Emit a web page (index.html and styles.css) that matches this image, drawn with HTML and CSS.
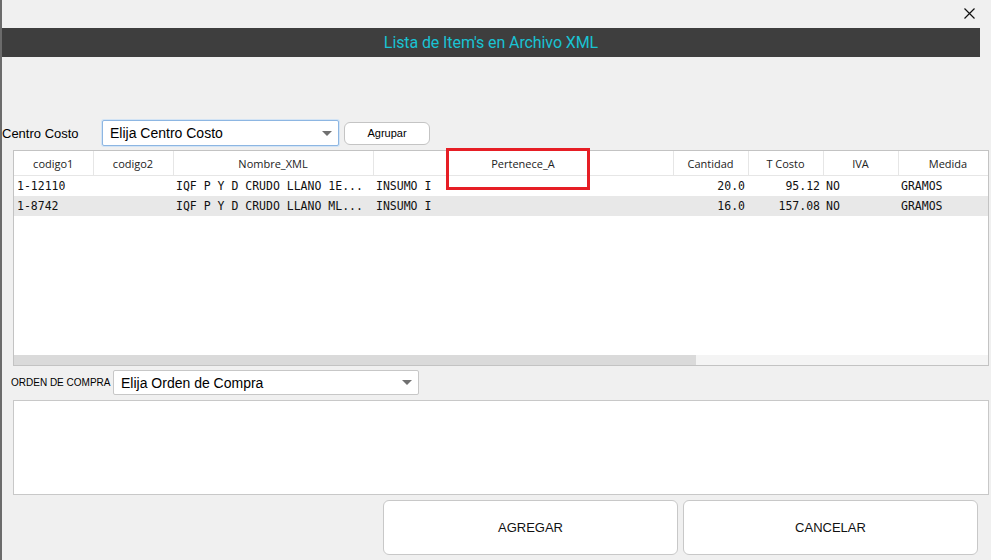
FILE: index.html
```html
<!DOCTYPE html>
<html lang="es">
<head>
    <meta charset="UTF-8">
    <title>Lista de Item's en Archivo XML</title>
    <link rel="stylesheet" href="styles.css">
</head>
<body>
    <div class="window">
        <div class="top-strip">
            <span class="close-btn">
                <svg width="11" height="11" viewBox="0 0 11 11"><path d="M0.5 0.5 L10.5 10.5 M10.5 0.5 L0.5 10.5" stroke="#111" stroke-width="1.2" fill="none"/></svg>
            </span>
        </div>
        <div class="title-bar">Lista de Item's en Archivo XML</div>

        <div class="cost-row">
            <label class="cost-label">Centro Costo</label>
            <div class="select select-focus">
                <span>Elija Centro Costo</span>
                <span class="arrow"></span>
            </div>
            <button class="small-btn">Agrupar</button>
        </div>

        <div class="grid-box">
            <div class="grid-scroll">
                <table class="grid">
                    <colgroup>
                        <col style="width:79px"><col style="width:80px"><col style="width:200px"><col style="width:300px">
                        <col style="width:75px"><col style="width:75px"><col style="width:75px"><col style="width:100px">
                    </colgroup>
                    <thead>
                        <tr>
                            <th>codigo1</th><th>codigo2</th><th>Nombre_XML</th><th>Pertenece_A</th>
                            <th>Cantidad</th><th>T Costo</th><th>IVA</th><th>Medida</th>
                        </tr>
                    </thead>
                    <tbody>
                        <tr>
                            <td>1-12110</td><td></td><td>IQF P Y D CRUDO LLANO 1E...</td><td>INSUMO I</td>
                            <td class="num">20.0</td><td class="num">95.12</td><td>NO</td><td>GRAMOS</td>
                        </tr>
                        <tr class="alt">
                            <td>1-8742</td><td></td><td>IQF P Y D CRUDO LLANO ML...</td><td>INSUMO I</td>
                            <td class="num">16.0</td><td class="num">157.08</td><td>NO</td><td>GRAMOS</td>
                        </tr>
                    </tbody>
                </table>
            </div>
            <div class="hscroll"><div class="hthumb"></div></div>
            <div class="highlight"></div>
        </div>

        <div class="order-row">
            <label class="order-label">ORDEN DE COMPRA</label>
            <div class="select order-select">
                <span>Elija Orden de Compra</span>
                <span class="arrow"></span>
            </div>
        </div>

        <div class="notes"></div>

        <div class="actions">
            <button class="big-btn">AGREGAR</button>
            <button class="big-btn">CANCELAR</button>
        </div>
    </div>
</body>
</html>
```

FILE: styles.css
```css
/* General */
body {
    margin: 0;
    padding: 0;
    background-color: #f0f0f0;
    font-family: 'Liberation Sans', Arial, sans-serif;
    color: #000;
}

.window {
    height: 560px;
    border-left: 2px solid #6b6b6b;
    box-sizing: border-box;
    overflow: hidden;
}

/* Top */
.top-strip {
    height: 28px;
    display: flex;
    justify-content: flex-end;
    align-items: flex-start;
}

.close-btn {
    margin: 8px 16px 0 0;
    line-height: 0;
}

.title-bar {
    height: 29px;
    margin-right: 11px;
    background-color: #3e3e3e;
    color: #19c3d3;
    font-family: Roboto, 'Liberation Sans', sans-serif;
    font-size: 16px;
    letter-spacing: -0.1px;
    text-align: center;
    line-height: 30px;
}

/* Centro costo */
.cost-row {
    display: flex;
    align-items: center;
    margin-top: 63px;
    height: 26px;
}

.cost-label {
    width: 100px;
    font-size: 13px;
}

.select {
    display: flex;
    align-items: center;
    justify-content: space-between;
    box-sizing: border-box;
    background: #fff;
    border: 1px solid #c7c7c7;
    border-radius: 2px;
    padding: 0 6px 0 7px;
    font-size: 14px;
}

.select-focus {
    width: 237px;
    height: 26px;
    border: 1px solid #8db6e2;
    box-shadow: 0 0 0 1px #d3e4f5;
}

.arrow {
    width: 0;
    height: 0;
    border-left: 5px solid transparent;
    border-right: 5px solid transparent;
    border-top: 5px solid #707070;
}

.small-btn {
    margin-left: 5px;
    width: 86px;
    height: 23px;
    background: #fff;
    border: 1px solid #c4c4c4;
    border-radius: 6px;
    font-family: 'Liberation Sans', Arial, sans-serif;
    font-size: 11px;
    padding: 0;
}

/* Grid */
.grid-box {
    position: relative;
    margin: 4px 2px 0 11px;
    height: 216px;
    box-sizing: border-box;
    border: 1px solid #c3c3c3;
    background: #fff;
    display: flex;
    flex-direction: column;
}

.grid-scroll {
    flex: 1;
    overflow: hidden;
}

.grid {
    border-collapse: collapse;
    table-layout: fixed;
    width: 984px;
}

.grid th {
    height: 24px;
    font-family: 'Open Sans', sans-serif;
    font-weight: normal;
    font-size: 11px;
    color: #222;
    border-right: 1px solid #e6e6e6;
    border-bottom: 1px solid #e6e6e6;
    padding: 0;
    white-space: nowrap;
}

.grid td {
    height: 20px;
    padding: 0 3px;
    font-family: 'DejaVu Sans Mono', monospace;
    font-size: 11.5px;
    color: #111;
    white-space: nowrap;
    overflow: hidden;
}

.grid td.num {
    text-align: right;
}

.grid tr.alt td {
    background: #e8e8e8;
}

.hscroll {
    height: 10px;
    background: #f4f4f4;
}

.hthumb {
    width: 682px;
    height: 100%;
    background: #dadada;
}

.highlight {
    position: absolute;
    left: 432px;
    top: -3px;
    width: 138px;
    height: 36px;
    border: 3px solid #e61e25;
}

/* Orden de compra */
.order-row {
    display: flex;
    align-items: center;
    margin: 4px 0 0 9px;
    height: 25px;
}

.order-label {
    font-size: 10px;
    width: 102px;
}

.order-select {
    width: 306px;
    height: 25px;
}

.notes {
    margin: 5px 2px 0 11px;
    height: 95px;
    box-sizing: border-box;
    background: #fff;
    border: 1px solid #c8c8c8;
}

/* Buttons */
.actions {
    display: flex;
    justify-content: flex-end;
    gap: 5px;
    margin-top: 5px;
    padding-right: 13px;
}

.big-btn {
    width: 295px;
    height: 55px;
    background: #fff;
    border: 1px solid #c8c8c8;
    border-radius: 6px;
    font-family: 'Liberation Sans', Arial, sans-serif;
    font-size: 13px;
    color: #111;
    padding: 0;
}
```
